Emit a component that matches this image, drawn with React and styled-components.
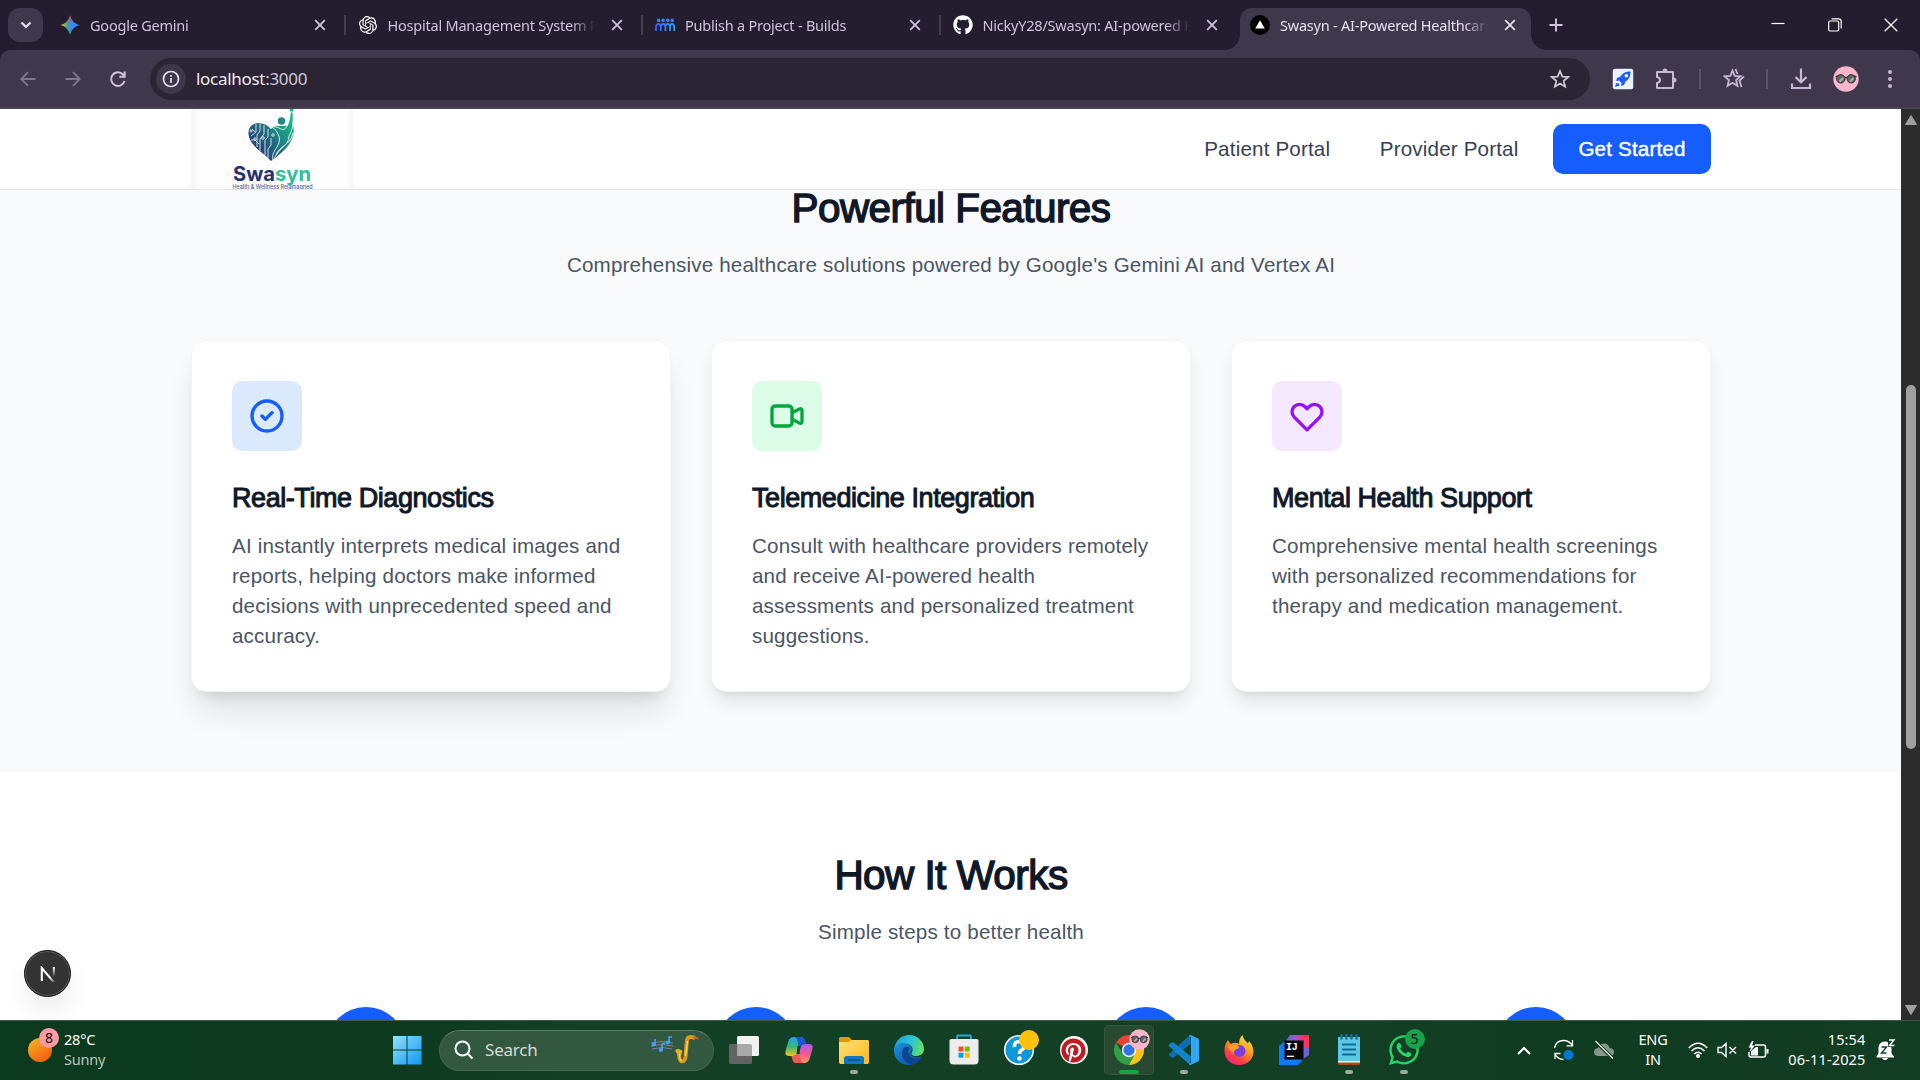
import React from "react";
import styled, { createGlobalStyle } from "styled-components";
import { FaGithub, FaPinterest, FaWhatsapp } from "react-icons/fa";
import { SiOpenai } from "react-icons/si";

const tabs = [
  { icon: "gemini", title: "Google Gemini" },
  { icon: "openai", title: "Hospital Management System P" },
  { icon: "builds", title: "Publish a Project - Builds" },
  { icon: "github", title: "NickyY28/Swasyn: AI-powered H" },
  { icon: "vercel", title: "Swasyn - AI-Powered Healthcare", active: true },
];

const features = [
  {
    icon: "check",
    color: "#155dfc",
    tint: "#dbeafe",
    raised: true,
    title: "Real-Time Diagnostics",
    text: "AI instantly interprets medical images and reports, helping doctors make informed decisions with unprecedented speed and accuracy.",
  },
  {
    icon: "video",
    color: "#00a63e",
    tint: "#dcfce7",
    title: "Telemedicine Integration",
    text: "Consult with healthcare providers remotely and receive AI-powered health assessments and personalized treatment suggestions.",
  },
  {
    icon: "heart",
    color: "#9810fa",
    tint: "#f3e8ff",
    title: "Mental Health Support",
    text: "Comprehensive mental health screenings with personalized recommendations for therapy and medication management.",
  },
];

const featurePaths = {
  check: "M9 12l2 2 4-4m6 2a9 9 0 11-18 0 9 9 0 0118 0z",
  video:
    "M15 10l4.553-2.276A1 1 0 0121 8.618v6.764a1 1 0 01-1.447.894L15 14M5 18h8a2 2 0 002-2V8a2 2 0 00-2-2H5a2 2 0 00-2 2v8a2 2 0 002 2z",
  heart:
    "M4.318 6.318a4.5 4.5 0 000 6.364L12 20.364l7.682-7.682a4.5 4.5 0 00-6.364-6.364L12 7.636l-1.318-1.318a4.5 4.5 0 00-6.364 0z",
};

const apps = [
  { name: "taskview" },
  { name: "copilot" },
  { name: "explorer", running: true },
  { name: "edge" },
  { name: "store" },
  { name: "help" },
  { name: "pinterest" },
  { name: "chrome", active: true },
  { name: "vscode", running: true },
  { name: "firefox" },
  { name: "idea" },
  { name: "notepad", running: true },
  { name: "whatsapp", running: true },
];

function TabIcon({ name }) {
  switch (name) {
    case "gemini":
      return (
        <svg width="20" height="20" viewBox="0 0 20 20">
          <defs>
            <linearGradient id="gemA" x1="0" y1="0.5" x2="1" y2="0.5">
              <stop offset="0" stopColor="#fbbc04" />
              <stop offset="0.4" stopColor="#34a0a4" />
              <stop offset="0.55" stopColor="#4285f4" />
              <stop offset="1" stopColor="#3186ff" />
            </linearGradient>
            <linearGradient id="gemB" x1="0.5" y1="0" x2="0.5" y2="1">
              <stop offset="0" stopColor="#ea4335" />
              <stop offset="0.4" stopColor="#ea4335" stopOpacity="0" />
              <stop offset="0.7" stopColor="#34a853" stopOpacity="0" />
              <stop offset="1" stopColor="#34a853" />
            </linearGradient>
          </defs>
          <path d="M10 0.5Q12 8 19.5 10Q12 12 10 19.5Q8 12 0.5 10Q8 8 10 0.5Z" fill="url(#gemA)" />
          <path d="M10 0.5Q12 8 19.5 10Q12 12 10 19.5Q8 12 0.5 10Q8 8 10 0.5Z" fill="url(#gemB)" />
        </svg>
      );
    case "openai":
      return <SiOpenai size={18} color="#fff" />;
    case "builds":
      return (
        <svg width="20" height="14" viewBox="0 0 20 14">
          <defs>
            <linearGradient id="bld" x1="0" y1="0" x2="1" y2="0">
              <stop offset="0" stopColor="#3d5afe" />
              <stop offset="1" stopColor="#22a5f7" />
            </linearGradient>
          </defs>
          <g fill="#3f7bfa">
            <circle cx="3.6" cy="2.4" r="1.8" />
            <circle cx="8.2" cy="2.4" r="1.8" />
            <circle cx="12.8" cy="2.4" r="1.8" />
            <circle cx="17.2" cy="2.4" r="1.8" />
          </g>
          <path d="M1 13V9.5Q1 6 3.6 6Q5.8 6 5.8 9V13M5.8 9.5Q5.8 6 8.2 6Q10.4 6 10.4 9V13M10.4 9.5Q10.4 6 12.6 6Q15 6 15 9V13M15 9.5Q15 6 17 6Q19.2 6 19.2 9V13" fill="none" stroke="url(#bld)" strokeWidth="1.8" />
        </svg>
      );
    case "github":
      return <FaGithub size={20} color="#fff" />;
    default:
      return (
        <svg width="20" height="20" viewBox="0 0 20 20">
          <circle cx="10" cy="10" r="10" fill="#000" />
          <path d="M10 5.2L14.8 13.6H5.2Z" fill="#fff" />
        </svg>
      );
  }
}

function CloseIcon() {
  return (
    <svg width="12" height="12" viewBox="0 0 12 12" fill="none" stroke="currentColor" strokeWidth="1.8">
      <path d="M1.2 1.2L10.8 10.8M10.8 1.2L1.2 10.8" />
    </svg>
  );
}

function Avatar({ size }) {
  return (
    <svg width={size} height={size} viewBox="0 0 26 26">
      <circle cx="13" cy="13" r="12.7" fill="#f7b6c9" />
      <circle cx="7.8" cy="12.8" r="4.2" fill="#5b6664" stroke="#3c3030" />
      <circle cx="18.2" cy="12.8" r="4.2" fill="#5b6664" stroke="#3c3030" />
      <path d="M6.5 15.5L10 12M17 15.5L20.500 12" stroke="#a9b5b2" strokeWidth="2" />
      <path d="M2.500 10.800L5 9.800M11.800 11.500H14.200M21 9.800L23.500 10.800" stroke="#3a2c2c" strokeWidth="1.300" />
    </svg>
  );
}

function SwasynLogo() {
  return (
    <svg width="162" height="80" viewBox="0 0 162 80">
      <defs>
        <linearGradient id="heartFill" x1="0" y1="0.8" x2="1" y2="0.1">
          <stop offset="0" stopColor="#272f74" />
          <stop offset="0.5" stopColor="#20697f" />
          <stop offset="1" stopColor="#20b387" />
        </linearGradient>
        <linearGradient id="figure" x1="0" y1="1" x2="0.6" y2="0">
          <stop offset="0" stopColor="#23567d" />
          <stop offset="1" stopColor="#16b68a" />
        </linearGradient>
      </defs>
      <path d="M80 52C75 45 57.500 37 57.500 24C57.500 12 73 11 80 20C84 16 88 17 92 17L102 16C106 31 94 42 80 52Z" fill="url(#heartFill)" />
      <g fill="none" stroke="#fff" strokeWidth="0.8">
        <path d="M65 15V23L60 27M69 14V22L66 26V38M73 16V25L69 30V42M77 20V28L74 31V46M61 20L64 23M80 29V36L77 40V49M60 31H64L68 35" />
        <circle cx="72" cy="29" r="1.300" />
        <circle cx="64" cy="30" r="1.200" />
        <circle cx="82" cy="26" r="1.300" />
        <circle cx="60" cy="22" r="1.100" />
      </g>
      <path d="M82 52C79 41 91 38 88 27Q86 21 80 17Q88 18 92 21Q98 19 99.500 3H102Q103 20 98 27C98 37 88 38 82 52Z" fill="url(#figure)" stroke="#fff" strokeWidth="0.8" />
      <path d="M85 46C88 37 100 36 102 24" fill="none" stroke="#fff" strokeWidth="0.9" />
      <circle cx="90.500" cy="12" r="3.700" fill="#1b8a80" />
      <path d="M99 0H102.500V2.500H99Z" fill="#20b99a" />
      <text x="42" y="72" fontFamily="Inter, sans-serif" fontWeight="700" fontSize="20" fill="#253070" textLength="78" lengthAdjust="spacingAndGlyphs">
        Swa<tspan fill="#2cbfa0">syn</tspan>
      </text>
      <text x="41.500" y="80" fontFamily="Inter, sans-serif" fontWeight="500" fontSize="5.600" fill="#5a5f92" textLength="80" lengthAdjust="spacingAndGlyphs">
        Health &amp; Wellness Reiamagned
      </text>
    </svg>
  );
}

function AppIcon({ name }) {
  switch (name) {
    case "taskview":
      return (
        <svg width="32" height="32" viewBox="0 0 32 32">
          <rect x="1" y="10" width="23" height="20" rx="1.500" fill="#636363" />
          <rect x="9" y="2" width="22" height="20" rx="1.500" fill="#f2f2f2" />
          <path d="M9 10H22.500Q24 10 24 11.500V22H10.500Q9 22 9 20.500Z" fill="#a9a9a9" />
        </svg>
      );
    case "copilot":
      return (
        <svg width="32" height="32" viewBox="0 0 32 32">
          <defs>
            <linearGradient id="copA" x1="0" y1="0" x2="0" y2="1">
              <stop offset="0" stopColor="#1fa5e8" />
              <stop offset="0.5" stopColor="#35b77a" />
              <stop offset="1" stopColor="#f5c516" />
            </linearGradient>
            <linearGradient id="copB" x1="0" y1="0" x2="0" y2="1">
              <stop offset="0" stopColor="#a75cf0" />
              <stop offset="0.5" stopColor="#f0569b" />
              <stop offset="1" stopColor="#ff9c55" />
            </linearGradient>
          </defs>
          <path d="M11 3H20L14 20Q13 22 10 22H6Q1.500 22 2.500 17L5.500 7Q7 3 11 3Z" fill="url(#copA)" />
          <path d="M21 29H12L18 12Q19 10 22 10H26Q30.500 10 29.500 15L26.500 25Q25 29 21 29Z" fill="url(#copB)" />
          <path d="M11 3H18Q21 3 22 6L23.500 10H21Q18.500 10 17.500 12L16 16L14.500 7Q13.500 3 11 3Z" fill="#1f55d0" />
          <path d="M21 29H13Q10.500 29 9.500 26L8.500 22H10Q13 22 14 20L16 15L17.500 25Q18.500 29 21 29Z" fill="#ee5b58" />
          <path d="M14.500 12H17.500L16.500 20H13.500Z" fill="#134024" />
        </svg>
      );
    case "explorer":
      return (
        <svg width="32" height="32" viewBox="0 0 32 32">
          <defs>
            <linearGradient id="fold" x1="0" y1="0" x2="1" y2="1">
              <stop offset="0" stopColor="#ffe07a" />
              <stop offset="1" stopColor="#fbb916" />
            </linearGradient>
          </defs>
          <path d="M1 4.500Q1 3 2.500 3H11L14 6H22V12H1Z" fill="#dd9b00" />
          <path d="M1 8H10.500L13.500 6H30Q31 6 31 7.500V28Q31 30 29.500 30H2.500Q1 30 1 28Z" fill="url(#fold)" />
          <path d="M6 30V24.500Q6 22 8.500 22H23.500Q26 22 26 24.500V30Z" fill="#0f78c4" />
          <path d="M10 26H22" stroke="#0b4a80" strokeWidth="1.500" />
        </svg>
      );
    case "edge":
      return (
        <svg width="32" height="32" viewBox="0 0 32 32">
          <defs>
            <linearGradient id="edgA" x1="0" y1="0.3" x2="1" y2="0.5">
              <stop offset="0" stopColor="#1a9be0" />
              <stop offset="0.6" stopColor="#2fc7d0" />
              <stop offset="1" stopColor="#66e05a" />
            </linearGradient>
            <linearGradient id="edgB" x1="0" y1="0" x2="1" y2="1">
              <stop offset="0" stopColor="#1b8fe0" />
              <stop offset="1" stopColor="#0c4d9a" />
            </linearGradient>
          </defs>
          <path d="M1 16C2 6 9 1 16 1C25 1 31 8 31 15C31 20 27 22 23 22C19 22 17.500 20 19 18C21 14 18 10 13 10C7 10 2 13 1 18Z" fill="url(#edgA)" />
          <path d="M1 17C2 10 9 8 13 9.500C18 11 20 15 18 18C16 20 19 24 25 23Q28 22.500 28.500 23C26 28 21 31 16 31C7 31 1 24 1 17Z" fill="url(#edgB)" />
          <path d="M12 13C6 18 9 27 17 30.500C22 31 26 28 28.500 23C23 26 16 24 15.500 18Q15.500 15 17 14Q14 12 12 13Z" fill="#0b4590" />
        </svg>
      );
    case "store":
      return (
        <svg width="32" height="32" viewBox="0 0 32 32">
          <path d="M9 7V2.500Q9 1.500 10 1.500H22Q23 1.500 23 2.500V7" fill="none" stroke="#22a7e0" strokeWidth="1.800" />
          <path d="M1.500 6.500Q1.500 5 3 5H29Q30.500 5 30.500 6.500V26.500Q30.500 30.500 26.500 30.500H5.500Q1.500 30.500 1.500 26.500Z" fill="#ededed" />
          <path d="M10.500 12.500H15.500V17.500H10.500Z" fill="#f25022" />
          <path d="M16.700 12.500H21.700V17.500H16.700Z" fill="#7fba00" />
          <path d="M10.500 18.700H15.500V23.700H10.500Z" fill="#00a4ef" />
          <path d="M16.700 18.700H21.700V23.700H16.700Z" fill="#ffb900" />
        </svg>
      );
    case "help":
      return (
        <svg width="40" height="40" viewBox="0 0 40 40">
          <circle cx="20" cy="20" r="14.300" fill="#0e98d8" stroke="#fff" strokeWidth="1.500" />
          <path d="M15.500 17Q15 11.500 20.300 11.500Q25.500 11.500 25.500 15.800Q25.500 18 22.800 19.700Q20.500 21 20.500 24" fill="none" stroke="#fff" strokeWidth="3.600" />
          <circle cx="20.500" cy="28.500" r="2.200" fill="#fff" />
          <circle cx="30" cy="10" r="10" fill="#ffc20e" />
        </svg>
      );
    case "pinterest":
      return (
        <PinCircle>
          <FaPinterest size={25} color="#c01a22" />
        </PinCircle>
      );
    case "chrome":
      return (
        <svg width="40" height="40" viewBox="0 0 40 40">
          <path d="M20 20L7.010 12.500A15 15 0 0 1 32.990 12.500Z" fill="#ea4335" />
          <path d="M20 12.500H33A15 15 0 0 1 20 35L18 30L26 20Z" fill="#fbc116" />
          <path d="M7 12.500L14 24L20 27.500L25.500 25L20 35A15 15 0 0 1 7 12.500Z" fill="#2f9e44" />
          <circle cx="20" cy="20" r="7.200" fill="#fff" />
          <circle cx="20" cy="20" r="5.700" fill="#2f74e8" />
        </svg>
      );
    case "vscode":
      return (
        <svg width="32" height="32" viewBox="0 0 32 32">
          <path d="M22 1L23 9.500L5.500 23.500Q4.500 24.200 3.500 23.500L1.200 21.500Q0.500 20.500 1.200 19.800Z" fill="#0d6db3" />
          <path d="M22 31L23 22.500L5.500 8.500Q4.500 7.800 3.500 8.500L1.200 10.500Q0.500 11.500 1.200 12.200Z" fill="#1583cb" />
          <path d="M22.500 1L30 4.500Q31 5 31 6V26Q31 27 30 27.500L22.500 31Q21.500 31.300 21 30.500L23 28.500V3.500L21 1.500Q21.500 0.700 22.500 1Z" fill="#2fa8f5" />
        </svg>
      );
    case "firefox":
      return (
        <svg width="32" height="32" viewBox="0 0 32 32">
          <defs>
            <linearGradient id="ffx" x1="0.8" y1="0" x2="0.2" y2="1">
              <stop offset="0" stopColor="#fff04a" />
              <stop offset="0.4" stopColor="#ff9a1f" />
              <stop offset="0.75" stopColor="#ff3b47" />
              <stop offset="1" stopColor="#e6208a" />
            </linearGradient>
          </defs>
          <path d="M5 6Q5.500 8.500 8 10Q12 7.500 16 10Q16 4 19.500 1Q20 5 25 9.500L26 7Q30.500 12 30.500 18C30 26 24 31 16 31C8 31 1.500 25 1.500 17Q1.500 10 5 6Z" fill="url(#ffx)" />
          <circle cx="16.500" cy="17" r="6" fill="#7a3fe0" />
          <path d="M5 11.500Q10 9 16 12.500Q17 14 13.500 15Q11 16 10.500 19Q6 17 5 11.500Z" fill="#ff9d1c" />
        </svg>
      );
    case "idea":
      return (
        <svg width="32" height="32" viewBox="0 0 32 32">
          <defs>
            <linearGradient id="idea" x1="0" y1="0.5" x2="1" y2="0.1">
              <stop offset="0.2" stopColor="#5b6fe0" />
              <stop offset="0.55" stopColor="#b04fc0" />
              <stop offset="0.85" stopColor="#ff2f55" />
            </linearGradient>
          </defs>
          <path d="M12 1H31V19L21 29H7V8Z" fill="url(#idea)" />
          <path d="M31 14V21L24 26V14Z" fill="#6f63cf" />
          <path d="M1 12L7 7V25.500H25L20 31H1Z" fill="#087cfa" />
          <rect x="6.500" y="6.500" width="19" height="19" fill="#000" />
          <text x="8" y="16" fontFamily="Liberation Mono, monospace" fontWeight="700" fontSize="10" fill="#fff">IJ</text>
          <path d="M8.800 22.300H16" stroke="#fff" strokeWidth="1.300" />
        </svg>
      );
    case "notepad":
      return (
        <svg width="32" height="32" viewBox="0 0 32 32">
          <path d="M5 28H27V29.500Q27 31 25.500 31H6.500Q5 31 5 29.500Z" fill="#a34d14" />
          <path d="M5 3H27V27H5Z" fill="#5cc6e4" />
          <path d="M5 27H27V28.500H5Z" fill="#f3f3f3" />
          <path d="M9 10.500H23M9 15.500H23M9 20.500H23" stroke="#0f6a93" strokeWidth="1.800" />
          <path d="M8.500 1V4.500M13.500 1V4.500M18.500 1V4.500M23.500 1V4.500" stroke="#1273a0" strokeWidth="2.400" strokeLinecap="round" />
        </svg>
      );
    default:
      return <FaWhatsapp size={34} color="#25d366" />;
  }
}

export default function App() {
  return (
    <Screen>
      <GlobalStyle />
      <TabStrip>
        <TabSearch>
          <svg width="12" height="8" viewBox="0 0 12 8" fill="none" stroke="#e6dff0" strokeWidth="2.200">
            <path d="M1.500 1.500L6 6L10.500 1.500" />
          </svg>
        </TabSearch>
        {tabs.map((tab, i) => (
          <Tab key={tab.icon} $active={tab.active} $divider={i < 3}>
            <Favicon>
              <TabIcon name={tab.icon} />
            </Favicon>
            <TabTitle>{tab.title}</TabTitle>
            <CloseIcon />
          </Tab>
        ))}
        <NewTab>
          <svg width="14" height="14" viewBox="0 0 14 14" stroke="#cdc3dc" strokeWidth="1.900">
            <path d="M7 0.500V13.500M0.500 7H13.500" />
          </svg>
        </NewTab>
        <WindowButtons>
          <svg width="14" height="14" viewBox="0 0 14 14" stroke="#fff" strokeWidth="1.200">
            <path d="M0.500 5.500H13.500" />
          </svg>
          <svg width="14" height="14" viewBox="0 0 14 14" fill="none" stroke="#fff" strokeWidth="1.200">
            <rect x="0.700" y="3" width="10" height="10" rx="1.500" />
            <path d="M3.500 0.800H10.500Q13.200 0.800 13.200 3.500V10.500" />
          </svg>
          <svg width="14" height="14" viewBox="0 0 14 14" stroke="#fff" strokeWidth="1.300">
            <path d="M0.700 0.700L13.300 13.300M13.300 0.700L0.700 13.300" />
          </svg>
        </WindowButtons>
      </TabStrip>

      <Toolbar>
        <NavButtons>
          <svg width="16" height="16" viewBox="0 0 16 16" fill="none" stroke="#7f778a" strokeWidth="1.800">
            <path d="M15.500 8H1.500M8 1.200L1.200 8L8 14.800" />
          </svg>
          <svg width="16" height="16" viewBox="0 0 16 16" fill="none" stroke="#7f778a" strokeWidth="1.800">
            <path d="M0.500 8H14.500M8 1.200L14.800 8L8 14.800" />
          </svg>
          <svg width="18" height="18" viewBox="0 0 18 18" fill="none" stroke="#cdc3dc" strokeWidth="2">
            <path d="M15.500 11A6.800 6.800 0 1 1 14 4.500L15.500 6.500M15.700 1.500V6.800H10.300" />
          </svg>
        </NavButtons>
        <Omnibox>
          <SiteInfo>
            <svg width="18" height="18" viewBox="0 0 18 18" fill="none" stroke="#e6dff0" strokeWidth="1.700">
              <circle cx="9" cy="9" r="7.500" />
              <path d="M9 8V13M9 5V6.700" />
            </svg>
          </SiteInfo>
          <Url>
            localhost<span>:3000</span>
          </Url>
          <svg width="20" height="20" viewBox="0 0 20 20" fill="none" stroke="#cfc9d6" strokeWidth="1.700">
            <path d="M10 2L12.300 7.600L18.300 8L13.700 11.900L15.200 17.800L10 14.600L4.800 17.800L6.300 11.900L1.700 8L7.700 7.600Z" />
          </svg>
        </Omnibox>
        <Extensions>
          <svg width="22" height="22" viewBox="0 0 22 22">
            <rect x="0.800" y="0.800" width="20.400" height="20.400" rx="2" fill="#eaf2ff" />
            <path d="M18.500 3.500Q12 3 8.500 8.500L5 10L4 13L7 12.500L9.500 15L9 18L12 17L13.500 13.500Q19 10 18.500 3.500Z" fill="#1f5cff" />
            <path d="M3 19L4 15.500L6.500 15L7.500 17.500Z" fill="#1f5cff" />
            <circle cx="14.300" cy="7.800" r="1.700" fill="#fff" />
          </svg>
          <svg width="22" height="22" viewBox="0 0 22 22" fill="none" stroke="#c6bad6" strokeWidth="2">
            <path d="M2 4H18V20H2V15Q5 14.500 5 12Q5 9.500 2 9Z" strokeLinejoin="round" />
            <path d="M7.500 3.500Q7.500 0.500 10 0.500Q12.500 0.500 12.500 3.500ZM18.500 9.500Q21.500 9.500 21.500 12Q21.500 14.500 18.500 14.500Z" fill="#c6bad6" stroke="none" />
          </svg>
          <Divider />
          <svg width="22" height="22" viewBox="0 0 22 22" fill="none" stroke="#c6bad6" strokeWidth="1.800">
            <path d="M9.500 2.500L11.700 7.800L17.500 8.300L13.100 12L14.400 17.800L9.500 14.800L4.600 17.800L5.900 12L1.500 8.300L7.300 7.800Z" />
            <path d="M12.500 1L14.500 6M21 8.500L16.500 12.500L18.500 19" />
          </svg>
          <Divider />
          <svg width="22" height="22" viewBox="0 0 22 22" fill="none" stroke="#c6bad6" strokeWidth="2.200">
            <path d="M11 0.500V14M5.500 9L11 14.300L16.500 9M2 15.500V20H20V15.500" />
          </svg>
          <ProfileButton>
            <Avatar size={26} />
          </ProfileButton>
          <svg width="6" height="20" viewBox="0 0 6 20" fill="#c6bad6">
            <circle cx="3" cy="3" r="2" />
            <circle cx="3" cy="10" r="2" />
            <circle cx="3" cy="17" r="2" />
          </svg>
        </Extensions>
      </Toolbar>

      <Viewport>
        <Page>
          <SiteHeader>
            <LogoBox>
              <SwasynLogo />
            </LogoBox>
            <SiteNav>
              <NavLink>Patient Portal</NavLink>
              <NavLink>Provider Portal</NavLink>
              <GetStarted>Get Started</GetStarted>
            </SiteNav>
          </SiteHeader>

          <Features>
            <Heading>Powerful Features</Heading>
            <Lead>Comprehensive healthcare solutions powered by Google's Gemini AI and Vertex AI</Lead>
            <CardGrid>
              {features.map((item) => (
                <Card key={item.title} $raised={item.raised}>
                  <IconTile $bg={item.tint}>
                    <svg width="40" height="40" viewBox="0 0 24 24" fill="none" stroke={item.color} strokeWidth="2" strokeLinecap="round" strokeLinejoin="round">
                      <path d={featurePaths[item.icon]} />
                    </svg>
                  </IconTile>
                  <CardTitle>{item.title}</CardTitle>
                  <CardText>{item.text}</CardText>
                </Card>
              ))}
            </CardGrid>
          </Features>

          <HowItWorks>
            <Heading>How It Works</Heading>
            <Lead>Simple steps to better health</Lead>
            <Steps>
              <StepCircle />
              <StepCircle />
              <StepCircle />
              <StepCircle />
            </Steps>
          </HowItWorks>
          <DevBadge>
            <svg width="16" height="16" viewBox="0 0 16 16" fill="none" strokeWidth="2.100">
              <defs>
                <linearGradient id="nA" x1="0" y1="0" x2="1" y2="1">
                  <stop offset="0.6" stopColor="#fff" />
                  <stop offset="1" stopColor="#fff" stopOpacity="0.1" />
                </linearGradient>
                <linearGradient id="nB" x1="0" y1="0" x2="0" y2="1">
                  <stop offset="0" stopColor="#fff" />
                  <stop offset="1" stopColor="#fff" stopOpacity="0" />
                </linearGradient>
              </defs>
              <path d="M1.800 15V2L14.500 17" stroke="url(#nA)" />
              <rect x="12.800" y="1" width="2.100" height="10" fill="url(#nB)" />
            </svg>
          </DevBadge>
        </Page>
        <Scrollbar>
          <svg width="12" height="10" viewBox="0 0 12 10" fill="#a0a0a0">
            <path d="M6 0.500L11.500 9.500H0.500Z" strokeLinejoin="round" stroke="#a0a0a0" />
          </svg>
          <Thumb />
          <svg width="12" height="10" viewBox="0 0 12 10" fill="#a0a0a0">
            <path d="M6 9.500L11.500 0.500H0.500Z" strokeLinejoin="round" stroke="#a0a0a0" />
          </svg>
        </Scrollbar>
      </Viewport>

      <Taskbar>
        <Weather>
          <Sun>
            <Badge $bg="#ff99a4" $top="-10px" $right="-7px">8</Badge>
          </Sun>
          <WeatherText>
            28°C
            <span>Sunny</span>
          </WeatherText>
        </Weather>
        <TaskCenter>
          <svg width="30" height="30" viewBox="0 0 30 30">
            <defs>
              <linearGradient id="win" x1="0" y1="0" x2="1" y2="1">
                <stop offset="0" stopColor="#8fe3fd" />
                <stop offset="1" stopColor="#0f97f5" />
              </linearGradient>
            </defs>
            <path d="M1 1H14.500V14.500H1ZM15.500 1H29.500V14.500H15.500ZM1 15.500H14.500V29.500H1ZM15.500 15.500H29.500V29.500H15.500Z" fill="url(#win)" />
          </svg>
          <SearchBox>
            <svg width="20" height="20" viewBox="0 0 20 20" fill="none" stroke="#fff" strokeWidth="2">
              <circle cx="8.500" cy="8.500" r="7" />
              <path d="M13.500 13.500L18.500 18.500" />
            </svg>
            <SearchText>Search</SearchText>
            <svg width="50" height="30" viewBox="0 0 50 30">
              <path d="M1 8Q12 5 23 8M1 11Q12 8 23 11M2 14Q12 11 22 14" fill="none" stroke="#8f74b8" strokeWidth="1" />
              <path d="M5 10V4M19 7V2L22 2M12 15V9L15 8" fill="none" stroke="#3fa0ff" strokeWidth="1.600" />
              <g fill="#3fa0ff">
                <circle cx="3.800" cy="9.500" r="2" />
                <circle cx="17.800" cy="7.500" r="2" />
                <circle cx="10.800" cy="15" r="2" />
              </g>
              <path d="M45 3Q38 0.500 37 5L35.500 22Q34.500 27.500 31 26Q29 25 29 17" fill="none" stroke="#d99a1c" strokeWidth="4" />
              <path d="M25 15.500Q28 12.500 32.500 16L31 21H28.500Z" fill="#e9ad2c" />
              <path d="M37.500 6L35.500 21M29.500 19Q29.500 25 31.500 26" fill="none" stroke="#ffdc74" strokeWidth="1.200" />
              <path d="M43.500 2.200L48.500 3.600" stroke="#b06b3c" strokeWidth="2" />
            </svg>
          </SearchBox>
          <Apps>
            {apps.map((app) => (
              <AppButton key={app.name} $active={app.active} $running={app.running}>
                <AppIcon name={app.name} />
                {app.name === "chrome" && (
                  <ProfileBadge>
                    <Avatar size={21} />
                  </ProfileBadge>
                )}
                {app.name === "whatsapp" && <Badge $bg="#16a34a" $top="4px" $right="4px">5</Badge>}
              </AppButton>
            ))}
          </Apps>
        </TaskCenter>
        <Tray>
          <TrayItem $width="40px">
            <svg width="14" height="9" viewBox="0 0 14 9" fill="none" stroke="#fff" strokeWidth="2">
              <path d="M1 8L7 2L13 8" />
            </svg>
          </TrayItem>
          <TrayItem $width="40px">
            <svg width="22" height="22" viewBox="0 0 22 22" fill="none" stroke="#fff" strokeWidth="1.300">
              <path d="M1.500 9Q3 1.500 10.500 1.500Q16 1.500 19.500 6.500M19.500 1V6.800H13.500M2 20V14.500H7.500M2 15Q5 20.500 10.500 20.500" />
              <circle cx="15.500" cy="16" r="5" fill="#0078d4" stroke="none" />
            </svg>
          </TrayItem>
          <TrayItem $width="40px">
            <svg width="22" height="20" viewBox="0 0 22 20">
              <path d="M5.500 16Q1 16 1 12Q1 8.500 5 8Q6.500 3.500 11 3.500Q15.500 3.500 16.500 8Q21 8.500 21 12Q21 16 16.500 16Z" fill="#84978a" />
              <path d="M2 1L20 18.500" stroke="#123f24" strokeWidth="3.500" />
              <path d="M2.500 1L20 18.500" stroke="#e4e9e5" strokeWidth="1.300" />
            </svg>
          </TrayItem>
          <Language>
            ENG
            <br />
            IN
          </Language>
          <TrayItem $width="30px">
            <svg width="20" height="16" viewBox="0 0 20 16" fill="none" stroke="#fff" strokeWidth="1.500">
              <path d="M0.800 6Q10 -3.500 19.200 6M3.500 9Q10 2.500 16.500 9M6.300 12Q10 8.500 13.700 12" />
              <circle cx="10" cy="14" r="2" fill="#fff" stroke="none" />
            </svg>
          </TrayItem>
          <TrayItem $width="29px">
            <svg width="20" height="16" viewBox="0 0 20 16" fill="none" stroke="#fff" strokeWidth="1.400">
              <path d="M1 5.500H4.500L9 1.500V14.500L4.500 10.500H1ZM12.500 5L19 11.500M19 5L12.500 11.500" />
            </svg>
          </TrayItem>
          <TrayItem $width="32px">
            <svg width="22" height="18" viewBox="0 0 22 18" fill="none" stroke="#fff" strokeWidth="1.500">
              <path d="M8 4H16.500Q18.500 4 18.500 6V14Q18.500 16 16.500 16H4Q2 16 2 14V11" />
              <path d="M4 14.500V10L9 6H11V14.500Z" fill="#fff" stroke="none" />
              <path d="M5 0L1.500 6.500H4L2.500 11L8 4.500H5L6.500 0Z" fill="#fff" stroke="none" />
              <path d="M20.500 8V12.500" strokeWidth="2" />
            </svg>
          </TrayItem>
          <Clock>
            15:54
            <br />
            06-11-2025
          </Clock>
          <svg width="20" height="22" viewBox="0 0 20 22">
            <path d="M2.500 14.500V9Q2.500 3 9 2.500Q15.500 3 15.500 9V14.500L18 17.500V18.500H0.500V17.500Z" fill="#fff" />
            <path d="M6.500 19.500Q9 22 11.500 19.500Z" fill="#fff" stroke="#fff" />
            <path d="M5.500 8H10.500L5.500 14H10.500" fill="none" stroke="#123f24" strokeWidth="1.400" />
            <path d="M12 0H20V8H12Z" fill="#123f24" />
            <path d="M13 1H18L13.500 6.500H18.500" fill="none" stroke="#fff" strokeWidth="1.400" />
          </svg>
        </Tray>
      </Taskbar>
    </Screen>
  );
}

const GlobalStyle = createGlobalStyle`
  * {
    box-sizing: border-box;
  }
  body {
    margin: 0;
    overflow: hidden;
  }
  svg {
    display: block;
    flex-shrink: 0;
  }
`;

const Screen = styled.div`
  width: 1920px;
  height: 1080px;
  display: flex;
  flex-direction: column;
  overflow: hidden;
  background: #241d2f;
  font-family: "Noto Sans", sans-serif;
`;

/* browser chrome */
const TabStrip = styled.div`
  height: 50px;
  display: flex;
  align-items: flex-start;
  padding-left: 8px;
  background: #241d2f;
`;
const TabSearch = styled.div`
  width: 35px;
  height: 34px;
  margin: 8px 7px 0 0;
  border-radius: 12px;
  background: #3f374b;
  display: flex;
  align-items: center;
  justify-content: center;
`;
const Tab = styled.div`
  position: relative;
  width: 297.500px;
  height: 42px;
  margin-top: 8px;
  padding: 0 22px 8px 10px;
  display: flex;
  align-items: center;
  color: ${(p) => (p.$active ? "#e6dff0" : "#cdc3dc")};
  ${(p) =>
    p.$active
      ? `
    width: 290.500px;
    padding-right: 15px;
    border-radius: 12px 12px 0 0;
    background: #3f374b;
    &::before, &::after {
      content: "";
      position: absolute;
      bottom: 0;
      width: 15px;
      height: 15px;
    }
    &::before {
      left: -15px;
      background: radial-gradient(circle at 0 0, transparent 14.500px, #3f374b 15px);
    }
    &::after {
      right: -15px;
      background: radial-gradient(circle at 100% 0, transparent 14.500px, #3f374b 15px);
    }
  `
      : ""}
  ${(p) =>
    p.$divider
      ? `
    &::after {
      content: "";
      position: absolute;
      right: 2px;
      top: 7px;
      width: 2px;
      height: 20px;
      background: #453c52;
    }
  `
      : ""}
`;
const Favicon = styled.div`
  width: 20px;
  display: flex;
  justify-content: center;
  margin-right: 10px;
`;
const TabTitle = styled.div`
  flex: 1;
  height: 24px;
  margin-right: 16px;
  overflow: hidden;
  white-space: nowrap;
  font-size: 14.500px;
  line-height: 24px;
  letter-spacing: -0.22px;
  mask-image: linear-gradient(90deg, #000 calc(100% - 24px), transparent);
`;
const NewTab = styled.div`
  padding: 18px 0 0 18px;
`;
const WindowButtons = styled.div`
  flex: 1;
  display: flex;
  justify-content: flex-end;
  gap: 42.500px;
  padding: 18px 22px 0 0;
`;
const Toolbar = styled.div`
  height: 59px;
  display: flex;
  align-items: center;
  background: #3f374b;
  border-bottom: 2px solid #4b444f;
  border-radius: 10px 10px 0 0;
`;
const NavButtons = styled.div`
  width: 150px;
  display: flex;
  align-items: center;
  gap: 28.500px;
  padding-left: 20px;
`;
const Omnibox = styled.div`
  width: 1440px;
  height: 42px;
  display: flex;
  align-items: center;
  padding: 0 20px 0 6px;
  border-radius: 21px;
  background: #2b2434;
`;
const SiteInfo = styled.div`
  width: 30px;
  height: 30px;
  display: flex;
  align-items: center;
  justify-content: center;
  border-radius: 50%;
  background: #3f374b;
`;
const Url = styled.div`
  flex: 1;
  padding-left: 10px;
  font-size: 17px;
  letter-spacing: -0.3px;
  color: #f0ebf5;
  span {
    color: #cfc9d6;
  }
`;
const Extensions = styled.div`
  flex: 1;
  display: flex;
  align-items: center;
  gap: 21.700px;
  padding-left: 21.500px;
`;
const Divider = styled.div`
  width: 2px;
  height: 20px;
  background: #5c5369;
`;
const ProfileButton = styled.div`
  margin: 0 7px 0 -1px;
`;

/* page */
const Viewport = styled.div`
  height: 911px;
  display: flex;
`;
const Page = styled.div`
  position: relative;
  width: 1901px;
  overflow: hidden;
  background: #fff;
  font-family: "Liberation Sans", Arial, sans-serif;
`;
const SiteHeader = styled.div`
  height: 81px;
  display: flex;
  justify-content: space-between;
  align-items: center;
  padding: 0 190px 0 191px;
  border-bottom: 1px solid #e5e7eb;
  background: #fff;
`;
const LogoBox = styled.div`
  width: 162px;
  height: 80px;
  background: linear-gradient(90deg, #f3f4f4, #fdfdfd 8px, #fefefe calc(100% - 6px), #f4f5f5);
`;
const SiteNav = styled.div`
  display: flex;
  align-items: center;
  font-size: 20.600px;
  letter-spacing: 0.170px;
`;
const NavLink = styled.div`
  margin-right: 49.500px;
  color: #364153;
  &:nth-child(2) {
    margin-right: 34.500px;
  }
`;
const GetStarted = styled.div`
  width: 158px;
  height: 50px;
  border-radius: 10px;
  background: #155dfc;
  color: #fff;
  line-height: 50px;
  text-align: center;
  -webkit-text-stroke: 0.4px #fff;
`;
const Features = styled.div`
  height: 581.500px;
  padding: 0 190px 0 191px;
  background: #f9fafb;
`;
const HowItWorks = styled.div`
  padding: 85px 190px 0 191px;
`;
const Heading = styled.h2`
  margin: 0 0 23px;
  font-size: 40.500px;
  font-weight: 400;
  line-height: 37px;
  letter-spacing: -0.570px;
  text-align: center;
  color: #101828;
  -webkit-text-stroke: 1.400px #101828;
`;
const Lead = styled.p`
  margin: 0 0 60px;
  font-size: 20.600px;
  line-height: 30px;
  letter-spacing: 0.170px;
  text-align: center;
  color: #4a5565;
`;
const CardGrid = styled.div`
  display: grid;
  grid-template-columns: repeat(3, 1fr);
  gap: 40px;
`;
const Card = styled.div`
  padding: 40px;
  border: 1px solid #f3f4f6;
  border-radius: 15px;
  background: #fff;
  box-shadow: ${(p) =>
    p.$raised
      ? "0 25px 31px -6px rgba(0,0,0,0.1), 0 10px 12.500px -7.500px rgba(0,0,0,0.1)"
      : "0 12.500px 19px -4px rgba(0,0,0,0.1), 0 5px 7.500px -5px rgba(0,0,0,0.1)"};
`;
const IconTile = styled.div`
  width: 70px;
  height: 70px;
  margin-bottom: 30px;
  display: flex;
  align-items: center;
  justify-content: center;
  border-radius: 10px;
  background: ${(p) => p.$bg};
`;
const CardTitle = styled.h3`
  margin: 0 0 15px;
  font-size: 27px;
  font-weight: 400;
  line-height: 35px;
  letter-spacing: -0.430px;
  color: #101828;
  -webkit-text-stroke: 1px #101828;
`;
const CardText = styled.p`
  margin: 0;
  font-size: 20.600px;
  line-height: 30px;
  letter-spacing: 0.170px;
  color: #4a5565;
`;
const Steps = styled.div`
  display: grid;
  grid-template-columns: repeat(4, 1fr);
  gap: 40px;
  justify-items: center;
`;
const StepCircle = styled.div`
  width: 80px;
  height: 80px;
  border-radius: 50%;
  background: #155dfc;
`;
const DevBadge = styled.div`
  position: absolute;
  left: 24px;
  top: 841px;
  width: 47px;
  height: 47px;
  display: flex;
  align-items: center;
  justify-content: center;
  border-radius: 50%;
  border: 1px solid #111;
  background: #333;
  box-shadow: inset 0 0 0 1px #5a5a5a, 0 16px 32px -8px rgba(0, 0, 0, 0.15);
`;
const Scrollbar = styled.div`
  width: 19px;
  display: flex;
  flex-direction: column;
  align-items: center;
  padding: 6px 0 5px;
  background: #2c2c2c;
`;
const Thumb = styled.div`
  width: 10px;
  height: 364px;
  margin: 260px 0 auto;
  border-radius: 5px;
  background: #9f9f9f;
`;

/* taskbar */
const Taskbar = styled.div`
  height: 60px;
  display: flex;
  align-items: center;
  padding-bottom: 1px;
  border-top: 1px solid #3a5c46;
  background: linear-gradient(90deg, #0c3a1e, #0d3a1f 20%, #134024 30%, #134024 70%, #0f3b20 82%, #123d22);
  color: #fff;
  font-size: 14.500px;
  line-height: 20px;
  letter-spacing: -0.2px;
`;
const Weather = styled.div`
  width: 392px;
  display: flex;
  align-items: center;
  padding-left: 28px;
`;
const Sun = styled.div`
  position: relative;
  width: 24px;
  height: 24px;
  border-radius: 50%;
  background: linear-gradient(150deg, #f2bb2c, #f26a10 75%);
`;
const Badge = styled.div`
  position: absolute;
  top: ${(p) => p.$top};
  right: ${(p) => p.$right};
  width: 20px;
  height: 20px;
  border-radius: 50%;
  background: ${(p) => p.$bg};
  color: #111;
  font-size: 14px;
  line-height: 20px;
  text-align: center;
`;
const WeatherText = styled.div`
  padding: 0 0 3px 12px;
  span {
    display: block;
    color: #b9c6bd;
  }
`;
const TaskCenter = styled.div`
  display: flex;
  align-items: center;
`;
const SearchBox = styled.div`
  width: 275px;
  height: 41px;
  margin: 0 2px 0 17px;
  padding: 0 13px 0 14px;
  display: flex;
  align-items: center;
  border: 1px solid #45664f;
  border-top-color: #5f7f68;
  border-radius: 21px;
  background: #32583f;
`;
const SearchText = styled.div`
  flex: 1;
  padding-left: 11px;
  font-size: 17px;
  color: #d5ddd7;
`;
const Apps = styled.div`
  display: flex;
`;
const AppButton = styled.div`
  position: relative;
  width: 50px;
  height: 50px;
  margin: 0 2.500px;
  display: flex;
  align-items: center;
  justify-content: center;
  border-radius: 5px;
  ${(p) => (p.$active ? "background: #26492f; box-shadow: inset 0 0 0 1px #32553c;" : "")}
  &::after {
    content: "";
    display: ${(p) => (p.$active || p.$running ? "block" : "none")};
    position: absolute;
    bottom: 1px;
    left: calc(50% - ${(p) => (p.$active ? "10px" : "4px")});
    width: ${(p) => (p.$active ? "20px" : "8px")};
    height: 4px;
    border-radius: 2px;
    background: ${(p) => (p.$active ? "#16a34a" : "#9aaa9f")};
  }
`;
const PinCircle = styled.div`
  width: 28px;
  height: 28px;
  display: flex;
  align-items: center;
  justify-content: center;
  border-radius: 50%;
  background: #fff;
`;
const ProfileBadge = styled.div`
  position: absolute;
  top: 4px;
  right: 4px;
`;
const Tray = styled.div`
  flex: 1;
  display: flex;
  align-items: center;
  justify-content: flex-end;
  padding-right: 24.500px;
`;
const TrayItem = styled.div`
  width: ${(p) => p.$width};
  display: flex;
  justify-content: center;
`;
const Language = styled.div`
  width: 59px;
  padding-bottom: 2px;
  text-align: center;
`;
const Clock = styled.div`
  width: 92px;
  margin-right: 10px;
  padding-bottom: 3px;
  text-align: right;
  white-space: nowrap;
  letter-spacing: 0.150px;
`;
